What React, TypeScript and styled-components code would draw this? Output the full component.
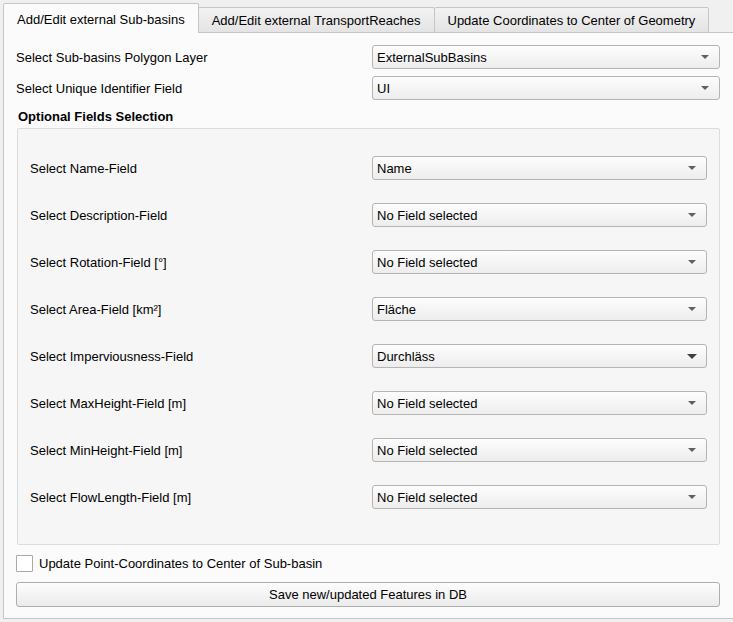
import React from "react";
import styled, { createGlobalStyle } from "styled-components";

const GlobalStyle = createGlobalStyle`
  html, body {
    margin: 0;
    padding: 0;
    background: #f0f0f0;
  }
  body {
    font-family: "Liberation Sans", Arial, sans-serif;
    font-size: 13px;
    color: #000;
  }
`;

// window + tabs
const Window = styled.div`
  width: 733px;
  height: 622px;
  box-sizing: border-box;
  padding: 3px 0 0 3px;
  overflow: hidden;
  background: #f0f0f0;
`;

const TabBar = styled.div`
  display: flex;
  align-items: flex-end;
  height: 29px;
  position: relative;
  z-index: 1;
`;

const Tab = styled.div<{ $active?: boolean }>`
  box-sizing: border-box;
  height: ${(p) => (p.$active ? 30 : 26)}px;
  display: flex;
  align-items: center;
  padding: ${(p) => (p.$active ? "2px 13px 0 13px" : "0 13px")};
  margin-bottom: -1px;
  margin-left: -1px;
  border: 1px solid #c6c6c6;
  border-bottom: ${(p) => (p.$active ? "none" : "1px solid #c6c6c6")};
  border-radius: 2px 2px 0 0;
  background: ${(p) =>
    p.$active ? "#fbfbfb" : "linear-gradient(#f2f2f2, #e4e4e4)"};
  position: relative;
  z-index: ${(p) => (p.$active ? 2 : 1)};
  white-space: nowrap;

  &:first-child {
    margin-left: 0;
  }
`;

const Pane = styled.div`
  box-sizing: border-box;
  width: 740px;
  height: 587px;
  border: 1px solid #c6c6c6;
  background: #fbfbfb;
  padding: 12px 0 0 12px;
`;

const Content = styled.div`
  width: 704px;
  display: flex;
  flex-direction: column;
`;

// rows
const TopRows = styled.div`
  display: flex;
  flex-direction: column;
  gap: 7px;
`;

const Row = styled.div<{ $labelWidth: number }>`
  display: grid;
  grid-template-columns: ${(p) => p.$labelWidth}px 1fr;
  align-items: center;
  height: 24px;
`;

const Label = styled.span`
  white-space: nowrap;
`;

// combo box
const Combo = styled.div`
  box-sizing: border-box;
  height: 24px;
  display: flex;
  align-items: center;
  justify-content: space-between;
  padding: 0 9px 0 4px;
  border: 1px solid #b4b4b4;
  border-radius: 3px;
  background: linear-gradient(#fdfdfd, #ededed);
`;

const Arrow = styled.span<{ $hover?: boolean }>`
  width: 0;
  height: 0;
  border-left: ${(p) => (p.$hover ? 5 : 4)}px solid transparent;
  border-right: ${(p) => (p.$hover ? 5 : 4)}px solid transparent;
  border-top: ${(p) => (p.$hover ? 5 : 4)}px solid
    ${(p) => (p.$hover ? "#404040" : "#606060")};
  margin-right: ${(p) => (p.$hover ? 0 : 1)}px;
`;

// group box
const GroupTitle = styled.div`
  font-weight: bold;
  line-height: 16px;
  margin: 9px 0 3px 2px;
`;

const GroupFrame = styled.div`
  box-sizing: border-box;
  width: 703px;
  margin-left: 1px;
  border: 1px solid #dcdcdc;
  border-radius: 2px;
  background: #f6f6f6;
  padding: 27px 12px 35px 12px;
  display: flex;
  flex-direction: column;
  gap: 23px;
`;

// checkbox + button
const CheckRow = styled.label`
  display: flex;
  align-items: center;
  gap: 6px;
  margin-top: 10px;
  height: 17px;
`;

const CheckBox = styled.span`
  box-sizing: border-box;
  width: 17px;
  height: 17px;
  border: 1px solid #a9a9a9;
  border-radius: 1px;
  background: #fff;
`;

const Button = styled.button`
  box-sizing: border-box;
  width: 704px;
  height: 25px;
  margin-top: 10px;
  border: 1px solid #aeaeae;
  border-radius: 3px;
  background: linear-gradient(#fdfdfd, #ebebeb);
  font-family: inherit;
  font-size: 13px;
  color: #000;
  padding: 0;
`;

const topFields = [
  { label: "Select Sub-basins Polygon Layer", value: "ExternalSubBasins" },
  { label: "Select Unique Identifier Field", value: "UI" },
];

const optionalFields = [
  { label: "Select Name-Field", value: "Name" },
  { label: "Select Description-Field", value: "No Field selected" },
  { label: "Select Rotation-Field [°]", value: "No Field selected" },
  { label: "Select Area-Field [km²]", value: "Fläche" },
  { label: "Select Imperviousness-Field", value: "Durchläss", hover: true },
  { label: "Select MaxHeight-Field [m]", value: "No Field selected" },
  { label: "Select MinHeight-Field [m]", value: "No Field selected" },
  { label: "Select FlowLength-Field [m]", value: "No Field selected" },
];

const App: React.FC = () => {
  return (
    <>
      <GlobalStyle />
      <Window>
        <TabBar>
          <Tab $active>Add/Edit external Sub-basins</Tab>
          <Tab>Add/Edit external TransportReaches</Tab>
          <Tab>Update Coordinates to Center of Geometry</Tab>
        </TabBar>
        <Pane>
          <Content>
            <TopRows>
              {topFields.map((f) => (
                <Row key={f.label} $labelWidth={356}>
                  <Label>{f.label}</Label>
                  <Combo>
                    <span>{f.value}</span>
                    <Arrow />
                  </Combo>
                </Row>
              ))}
            </TopRows>

            <GroupTitle>Optional Fields Selection</GroupTitle>
            <GroupFrame>
              {optionalFields.map((f) => (
                <Row key={f.label} $labelWidth={342}>
                  <Label>{f.label}</Label>
                  <Combo>
                    <span>{f.value}</span>
                    <Arrow $hover={f.hover} />
                  </Combo>
                </Row>
              ))}
            </GroupFrame>

            <CheckRow>
              <CheckBox />
              <span>Update Point-Coordinates to Center of Sub-basin</span>
            </CheckRow>
            <Button>Save new/updated Features in DB</Button>
          </Content>
        </Pane>
      </Window>
    </>
  );
};

export default App;
